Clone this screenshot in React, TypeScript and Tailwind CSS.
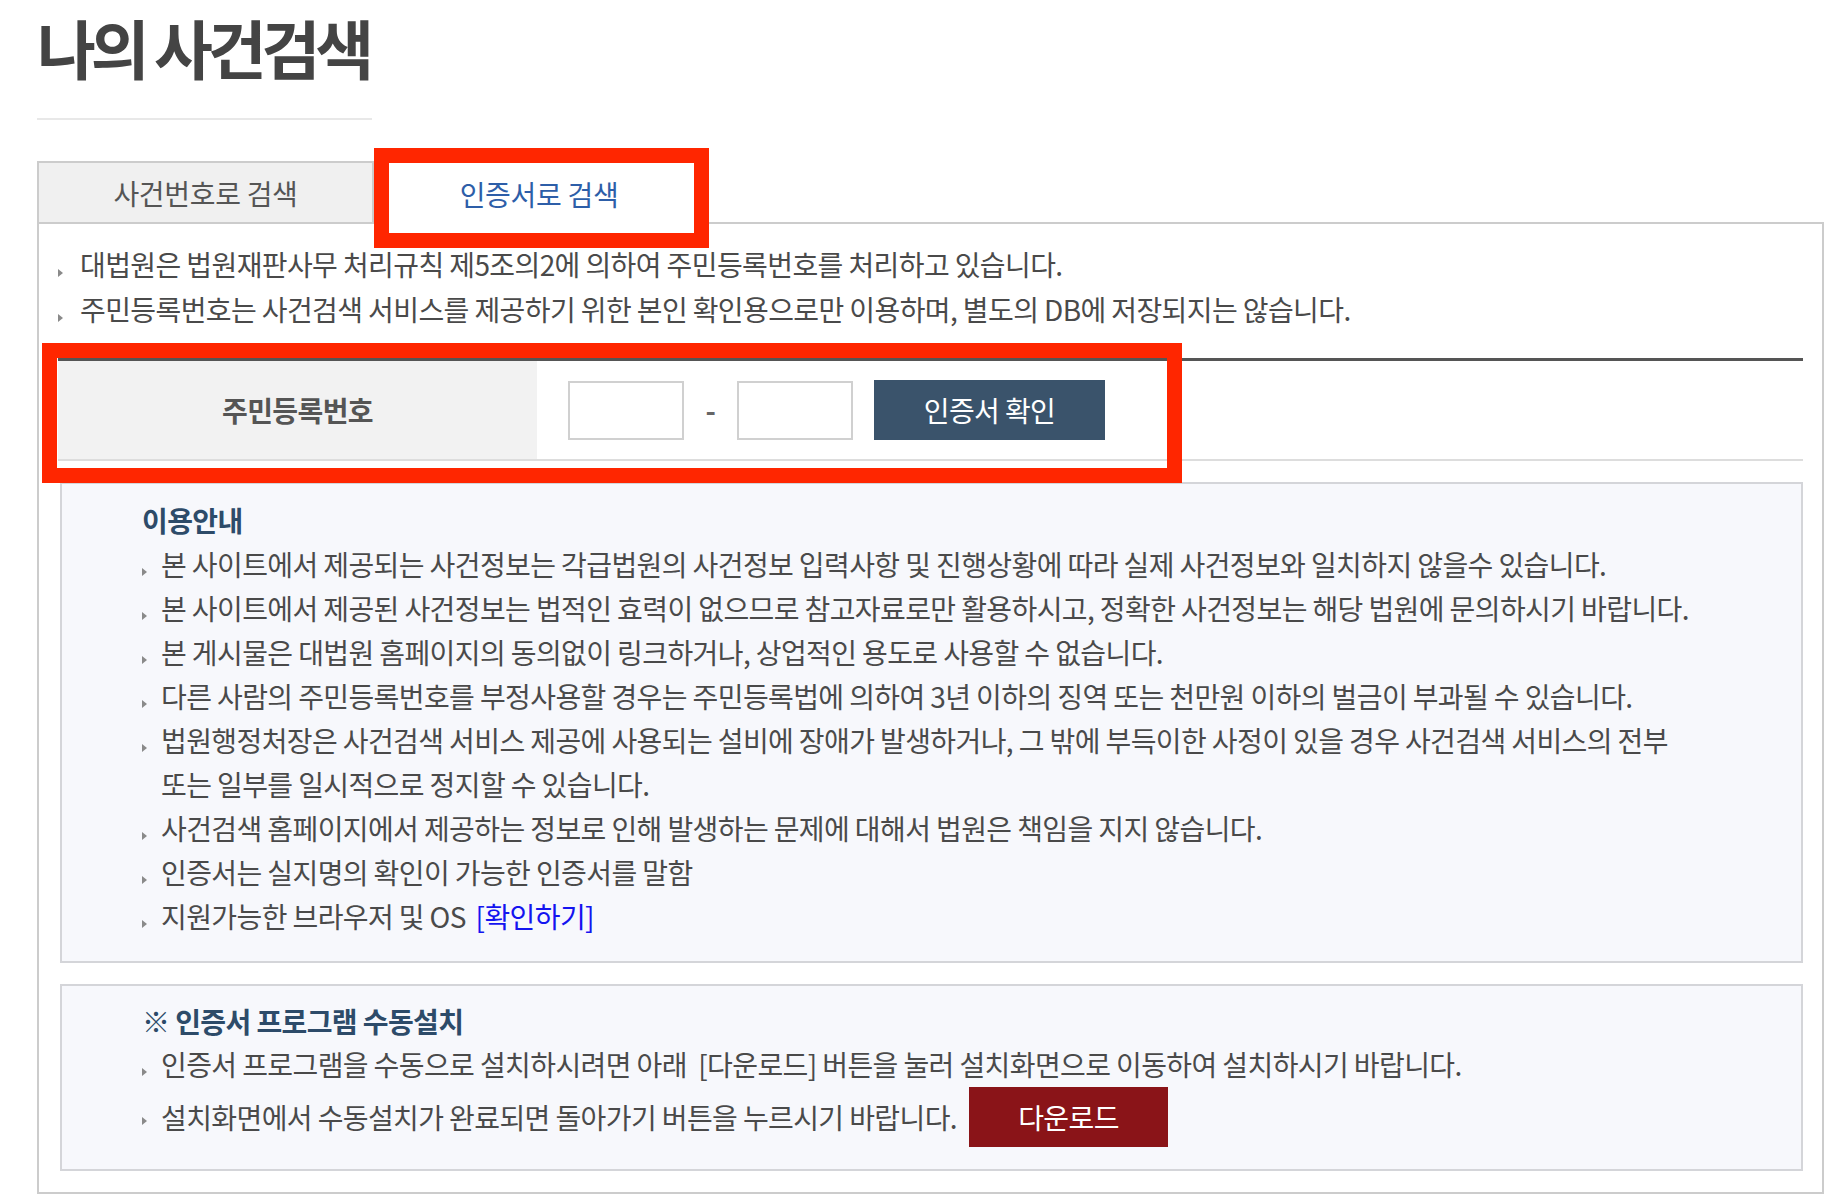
import React from "react";

const FONT = "font-['Noto_Sans_CJK_KR','Noto_Sans',sans-serif]";

function Bullet({ top = 25, zone = 22 }: { top?: number; zone?: number }) {
  return (
    <span className="shrink-0" style={{ width: zone, paddingTop: top }}>
      <span className="block h-0 w-0 border-y-[4px] border-l-[5px] border-y-transparent border-l-[#8a8a8a]" />
    </span>
  );
}

function Line({ children, lh = 45, zone = 22 }: { children: React.ReactNode; lh?: number; zone?: number }) {
  return (
    <li className="flex whitespace-nowrap" style={{ lineHeight: `${lh}px` }}>
      <Bullet top={lh === 45 ? 27 : 26} zone={zone} />
      <span>{children}</span>
    </li>
  );
}

const GUIDE: React.ReactNode[] = [
  "본 사이트에서 제공되는 사건정보는 각급법원의 사건정보 입력사항 및 진행상황에 따라 실제 사건정보와 일치하지 않을수 있습니다.",
  "본 사이트에서 제공된 사건정보는 법적인 효력이 없으므로 참고자료로만 활용하시고, 정확한 사건정보는 해당 법원에 문의하시기 바랍니다.",
  "본 게시물은 대법원 홈페이지의 동의없이 링크하거나, 상업적인 용도로 사용할 수 없습니다.",
  "다른 사람의 주민등록번호를 부정사용할 경우는 주민등록법에 의하여 3년 이하의 징역 또는 천만원 이하의 벌금이 부과될 수 있습니다.",
  <>
    법원행정처장은 사건검색 서비스 제공에 사용되는 설비에 장애가 발생하거나, 그 밖에 부득이한 사정이 있을 경우 사건검색 서비스의 전부
    <br />
    또는 일부를 일시적으로 정지할 수 있습니다.
  </>,
  "사건검색 홈페이지에서 제공하는 정보로 인해 발생하는 문제에 대해서 법원은 책임을 지지 않습니다.",
  "인증서는 실지명의 확인이 가능한 인증서를 말함",
  <>
    지원가능한 브라우저 및 OS <a className="ml-[4px] text-[#1414f0]">[확인하기]</a>
  </>,
];

export default function App() {
  return (
    <div className={`relative h-[1194px] w-[1832px] overflow-hidden bg-white text-[28px] tracking-[-0.6px] text-[#4a4a4a] ${FONT}`}>
      {/* 제목 */}
      <div className="pl-[37px] pt-[10px]">
        <h1 className="text-[64px] font-bold leading-[72px] tracking-[-0.08em] text-[#444]">나의 사건검색</h1>
        <div className="mt-[36px] h-[2px] w-[335px] bg-[#e8e8e8]" />
      </div>

      <div className="ml-[37px] mr-[8px] mt-[41px]">
        {/* 탭 */}
        <div className="flex h-[63px]">
          <div className="flex w-[337px] items-center justify-center border-2 border-[#cccccc] bg-[#f0f0f0] tracking-[-0.3px] text-[#555]">
            사건번호로 검색
          </div>
          <div className="flex w-[330px] items-center justify-center border-t-2 border-[#2a4a75] bg-white tracking-[-0.3px] text-[#2d5ea8]">
            인증서로 검색
          </div>
          <div className="flex-1 border-b-2 border-[#cccccc]" />
        </div>

        {/* 본문 */}
        <div className="border-2 border-t-0 border-[#cccccc] px-[19px] pb-[21px] pt-[18px]">
          <ul>
            <Line>대법원은 법원재판사무 처리규칙 제5조의2에 의하여 주민등록번호를 처리하고 있습니다.</Line>
            <Line>주민등록번호는 사건검색 서비스를 제공하기 위한 본인 확인용으로만 이용하며, 별도의 DB에 저장되지는 않습니다.</Line>
          </ul>

          {/* 주민등록번호 입력 */}
          <div className="mt-[26px] flex h-[103px] border-b-2 border-t-[3px] border-b-[#dddddd] border-t-[#555]">
            <div className="flex w-[479px] items-center justify-center bg-[#f2f2f2] font-bold text-[#555]">주민등록번호</div>
            <div className="flex items-center pl-[31px]">
              <input className="h-[59px] w-[116px] border-2 border-[#d0d0d0] bg-white outline-none" />
              <span className="w-[53px] text-center font-bold text-[#666]">-</span>
              <input className="h-[59px] w-[116px] border-2 border-[#d0d0d0] bg-white outline-none" />
              <button className="ml-[21px] h-[60px] w-[231px] bg-[#3a536b] text-white">인증서 확인</button>
            </div>
          </div>

          {/* 이용안내 */}
          <div className="ml-[2px] mt-[21px] border-2 border-[#d4d5d9] bg-[#f7f8fc] pb-[23px] pl-[80px] pt-[14px]">
            <h2 className="font-bold leading-[44px] text-[#2d4b69]">이용안내</h2>
            <ul>
              {GUIDE.map((g, i) => (
                <Line key={i} lh={44} zone={19}>
                  {g}
                </Line>
              ))}
            </ul>
          </div>

          {/* 수동설치 */}
          <div className="ml-[2px] mt-[21px] border-2 border-[#d4d5d9] bg-[#f7f8fc] pb-[22px] pl-[80px] pt-[14px]">
            <h2 className="font-bold leading-[42px] text-[#2d4b69]">※ 인증서 프로그램 수동설치</h2>
            <ul>
              <Line lh={44} zone={19}>
                인증서 프로그램을 수동으로 설치하시려면 아래 &nbsp;[다운로드] 버튼을 눌러 설치화면으로 이동하여 설치하시기 바랍니다.
              </Line>
              <li className="flex h-[61px] items-center whitespace-nowrap">
                <span className="w-[19px] shrink-0 pt-[8px]">
                  <span className="block h-0 w-0 border-y-[4px] border-l-[5px] border-y-transparent border-l-[#8a8a8a]" />
                </span>
                <span>설치화면에서 수동설치가 완료되면 돌아가기 버튼을 누르시기 바랍니다.</span>
                <button className="ml-[12px] h-[60px] w-[199px] bg-[#8a1418] text-white">다운로드</button>
              </li>
            </ul>
          </div>
        </div>
      </div>

      {/* 강조 표시 (붉은 테두리) */}
      <div className="pointer-events-none absolute left-[374px] top-[148px] h-[100px] w-[335px] border-[15px] border-[#ff2600]" />
      <div className="pointer-events-none absolute left-[42px] top-[343px] h-[140px] w-[1140px] border-[15px] border-[#ff2600]" />
    </div>
  );
}
